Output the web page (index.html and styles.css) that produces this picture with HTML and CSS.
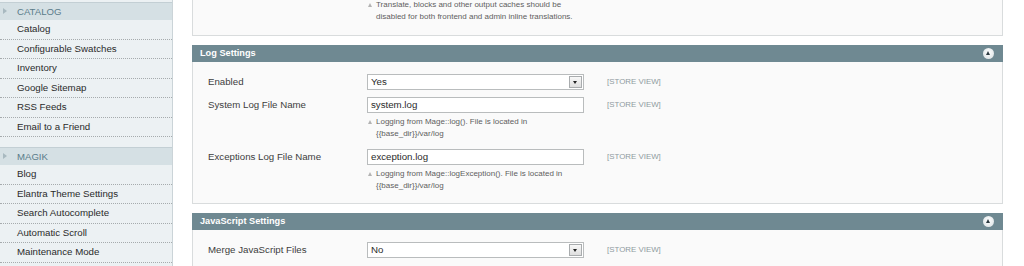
FILE: index.html
```html
<!DOCTYPE html>
<html>
<head>
<meta charset="utf-8">
<link rel="stylesheet" href="styles.css">
</head>
<body>
<div class="page">
  <aside class="sidebar">
    <div class="group-tail"></div>
    <div class="group">
      <div class="group-head"><span class="arrow"></span>CATALOG</div>
      <ul class="items">
        <li>Catalog</li>
        <li>Configurable Swatches</li>
        <li>Inventory</li>
        <li>Google Sitemap</li>
        <li>RSS Feeds</li>
        <li>Email to a Friend</li>
      </ul>
      <div class="group-spacer"></div>
    </div>
    <div class="group">
      <div class="group-head"><span class="arrow"></span>MAGIK</div>
      <ul class="items">
        <li>Blog</li>
        <li>Elantra Theme Settings</li>
        <li>Search Autocomplete</li>
        <li>Automatic Scroll</li>
        <li>Maintenance Mode</li>
        <li></li>
      </ul>
    </div>
  </aside>
  <main class="content">
    <div class="fieldset fieldset-top">
      <div class="grid">
        <div></div>
        <div class="note note-top">Translate, blocks and other output caches should be disabled for both frontend and admin inline translations.</div>
        <div></div>
      </div>
    </div>

    <section class="section">
      <div class="section-head"><span>Log Settings</span><span class="toggle"></span></div>
      <div class="fieldset">
        <div class="grid">
          <div class="label">Enabled</div>
          <div class="value"><div class="select"><span>Yes</span><span class="select-btn"></span></div></div>
          <div class="scope">[STORE VIEW]</div>

          <div class="label">System Log File Name</div>
          <div class="value">
            <div class="input">system.log</div>
            <div class="note">Logging from Mage::log(). File is located in {{base_dir}}/var/log</div>
          </div>
          <div class="scope">[STORE VIEW]</div>

          <div class="label">Exceptions Log File Name</div>
          <div class="value">
            <div class="input">exception.log</div>
            <div class="note">Logging from Mage::logException(). File is located in {{base_dir}}/var/log</div>
          </div>
          <div class="scope">[STORE VIEW]</div>
        </div>
      </div>
    </section>

    <section class="section">
      <div class="section-head"><span>JavaScript Settings</span><span class="toggle"></span></div>
      <div class="fieldset">
        <div class="grid">
          <div class="label">Merge JavaScript Files</div>
          <div class="value"><div class="select"><span>No</span><span class="select-btn"></span></div></div>
          <div class="scope">[STORE VIEW]</div>
        </div>
      </div>
    </section>
  </main>
</div>
</body>
</html>
```

FILE: styles.css
```css
* { box-sizing: border-box; }
html, body { margin: 0; padding: 0; background: #fff; }
body {
  font-family: "Liberation Sans", Arial, sans-serif;
  color: #333;
  height: 266px;
  overflow: hidden;
}
.page {
  display: flex;
  align-items: flex-start;
  width: 1024px;
  height: 266px;
  overflow: hidden;
}

/* Sidebar */
.sidebar {
  width: 173px;
  flex: none;
  background: #ecf1f3;
  border-right: 1px solid #cbd4d8;
  height: 266px;
}
.group-tail {
  height: 3px;
  border-bottom: 1px solid #c3cfd4;
}
.group-head {
  height: 17px;
  background: #d5e0e4;
  color: #5a7c8a;
  font-size: 9.6px;
  line-height: 17px;
  padding-left: 17px;
  position: relative;
}
.arrow {
  position: absolute;
  left: 3px;
  top: 5px;
  width: 0;
  height: 0;
  border-left: 4px solid #a8b9c0;
  border-top: 3.5px solid transparent;
  border-bottom: 3.5px solid transparent;
}
.items {
  list-style: none;
  margin: 0;
  padding: 0;
}
.items li {
  height: 19.5px;
  line-height: 18.5px;
  padding-left: 17px;
  font-size: 9.7px;
  color: #2a2a2a;
  border-bottom: 1px dotted #a6abad;
}
.group-spacer {
  height: 11px;
  border-bottom: 1px solid #c3cfd4;
}

/* Content */
.content {
  margin-left: 19px;
  width: 811px;
  flex: none;
}
.fieldset {
  background: #fafafa;
  border: 1px solid #d9dcdd;
  border-top: none;
  padding: 12px 15px 2px;
}
.fieldset-top {
  padding-top: 0;
  padding-bottom: 12px;
}
.grid {
  display: grid;
  grid-template-columns: 136px 217px 1fr;
  column-gap: 23px;
  align-items: start;
}
.label {
  font-size: 9.7px;
  color: #3d3d3d;
  line-height: 16px;
  padding-bottom: 7px;
}
.value { padding-bottom: 7px; }
.scope {
  font-size: 7.9px;
  color: #8f9aa0;
  line-height: 15px;
  padding-bottom: 7px;
}
.select, .input {
  height: 16px;
  border: 1px solid #b9bcbd;
  background: #fff;
  font-size: 9.7px;
  color: #2a2a2a;
  line-height: 14px;
  padding-left: 3px;
}
.select {
  display: flex;
  justify-content: space-between;
  align-items: center;
  padding-right: 1px;
}
.select-btn {
  width: 13px;
  height: 12px;
  border: 1px solid #a9acae;
  background: linear-gradient(#f8f8f8, #dedede);
  position: relative;
}
.select-btn::after {
  content: "";
  position: absolute;
  left: 3px;
  top: 4px;
  border-top: 3px solid #222;
  border-left: 2.5px solid transparent;
  border-right: 2.5px solid transparent;
}
.note {
  font-size: 8px;
  color: #5e5e5e;
  line-height: 12px;
  margin: 3px 0 2px;
  padding-left: 9px;
  position: relative;
}
.note::before {
  content: "";
  position: absolute;
  left: 1px;
  top: 4px;
  border-bottom: 4px solid #b3b3b3;
  border-left: 2.5px solid transparent;
  border-right: 2.5px solid transparent;
}
.note-top {
  margin-top: -1px;
  margin-bottom: 0;
}

.section { margin-top: 9px; }
.section-head {
  height: 17px;
  background: #6f8992;
  color: #fff;
  font-weight: bold;
  font-size: 9.2px;
  line-height: 17px;
  padding: 0 8px 0 8px;
  display: flex;
  justify-content: space-between;
  align-items: center;
}
.toggle {
  width: 11px;
  height: 11px;
  border-radius: 50%;
  background: radial-gradient(circle at 50% 40%, #ffffff, #d6dde0);
  position: relative;
  margin-right: 1px;
}
.toggle::after {
  content: "";
  position: absolute;
  left: 3px;
  top: 3px;
  border-bottom: 4px solid #2c3a40;
  border-left: 2.5px solid transparent;
  border-right: 2.5px solid transparent;
}
```
